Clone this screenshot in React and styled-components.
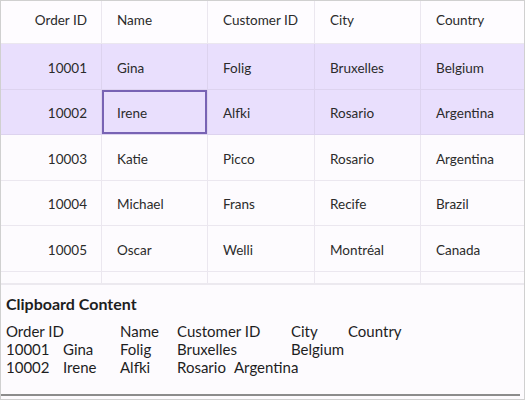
import React from "react";
import styled, { createGlobalStyle } from "styled-components";

const GlobalStyle = createGlobalStyle`
  body {
    margin: 0;
    font-family: "Lato", "Noto Sans", sans-serif;
    color: #262626;
  }
`;

const columns = [
  { key: "id", title: "Order ID", align: "right" },
  { key: "name", title: "Name" },
  { key: "customer", title: "Customer ID" },
  { key: "city", title: "City" },
  { key: "country", title: "Country" },
];

const orders = [
  { id: 10001, name: "Gina", customer: "Folig", city: "Bruxelles", country: "Belgium" },
  { id: 10002, name: "Irene", customer: "Alfki", city: "Rosario", country: "Argentina" },
  { id: 10003, name: "Katie", customer: "Picco", city: "Rosario", country: "Argentina" },
  { id: 10004, name: "Michael", customer: "Frans", city: "Recife", country: "Brazil" },
  { id: 10005, name: "Oscar", customer: "Welli", city: "Montréal", country: "Canada" },
  // next row only peeks in at the bottom of the viewport
  { id: "", name: "", customer: "", city: "", country: "" },
];

const selectedRows = [0, 1];
const currentCell = { row: 1, col: 1 };

const clipboardText =
  "Order ID\tName\tCustomer ID\tCity\tCountry\n" +
  "10001\tGina\tFolig\tBruxelles\tBelgium\n" +
  "10002\tIrene\tAlfki\tRosario\tArgentina";

const Frame = styled.div`
  width: 525px;
  height: 400px;
  box-sizing: border-box;
  border: 1px solid #d0d0d0;
  background: #fdfbfe;
  display: flex;
  flex-direction: column;
  overflow: hidden;
`;

const GridViewport = styled.div`
  height: 282px;
  flex-shrink: 0;
  overflow: hidden;
  border-bottom: 2px solid #ece9ef;
`;

const Grid = styled.div`
  display: grid;
  grid-template-columns: 101px 106px 107px 106px 1fr;
  grid-template-rows: 43px;
  grid-auto-rows: 45.5px;
`;

const HeaderCell = styled.div`
  display: flex;
  align-items: center;
  justify-content: ${(p) => (p.$align === "right" ? "flex-end" : "flex-start")};
  padding: 0 14px 4px 15px;
  font-size: 13.5px;
  color: #2b2b2b;
  background: #fefcff;
  border-right: ${(p) => (p.$last ? "none" : "1px solid #ebe7ef")};
  border-bottom: 1px solid #ebe7ef;
`;

const Cell = styled.div`
  position: relative;
  display: flex;
  align-items: center;
  justify-content: ${(p) => (p.$align === "right" ? "flex-end" : "flex-start")};
  padding: 3px 14px 0 15px;
  font-size: 13.5px;
  color: #2b2b2b;
  background: ${(p) => (p.$selected ? "#e9dffd" : "#fdfbfe")};
  border-right: ${(p) => (p.$last ? "none" : `1px solid ${p.$selected ? "#ddd3ef" : "#ebe7ef"}`)};
  border-bottom: 1px solid ${(p) => (p.$selected ? "#ddd3ef" : "#ebe7ef")};
  white-space: nowrap;

  ${(p) =>
    p.$current &&
    `
    &::after {
      content: "";
      position: absolute;
      left: 0;
      top: 0;
      right: 0;
      bottom: 0;
      border: 2px solid #7863b4;
    }
  `}
`;

const Clipboard = styled.div`
  padding: 9px 0 0 5px;
  display: flex;
  flex-direction: column;
`;

const Title = styled.div`
  font-weight: 700;
  font-size: 16px;
  color: #1e1e1e;
  line-height: 20px;
`;

const ClipText = styled.div`
  margin: 8px 0 0 -5px;
  padding-left: 5px;
  height: 72px;
  width: 514px;
  border-bottom: 2px solid #8c8c8c;
  white-space: pre;
  tab-size: 57px;
  font-size: 15px;
  line-height: 18px;
  color: #1e1e1e;
`;

export default function App() {
  return (
    <>
      <GlobalStyle />
      <Frame>
        <GridViewport>
          <Grid>
            {columns.map((c, i) => (
              <HeaderCell key={c.key} $align={c.align} $last={i === columns.length - 1}>
                {c.title}
              </HeaderCell>
            ))}
            {orders.map((o, r) =>
              columns.map((c, i) => (
                <Cell
                  key={`${r}-${c.key}`}
                  $align={c.align}
                  $last={i === columns.length - 1}
                  $selected={selectedRows.includes(r)}
                  $current={currentCell.row === r && currentCell.col === i}
                >
                  {o[c.key]}
                </Cell>
              ))
            )}
          </Grid>
        </GridViewport>
        <Clipboard>
          <Title>Clipboard Content</Title>
          <ClipText>{clipboardText}</ClipText>
        </Clipboard>
      </Frame>
    </>
  );
}
